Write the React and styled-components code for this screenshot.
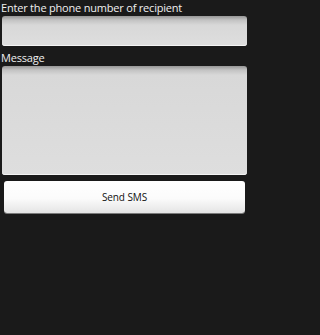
import React from 'react';
import styled, { createGlobalStyle } from 'styled-components';

const GlobalStyle = createGlobalStyle`
  html, body {
    margin: 0;
    padding: 0;
    background: #1a1a1a;
  }
  body {
    font-family: "Open Sans", "DejaVu Sans", sans-serif;
  }
`;

const Screen = styled.div`
  width: 250px;
  height: 335px;
  background: #1a1a1a;
  display: flex;
  flex-direction: column;
  box-sizing: border-box;
  padding: 0 3px 0 2px;
`;

const Label = styled.div`
  color: #f0f0f0;
  font-size: 11px;
  letter-spacing: -0.2px;
  line-height: 15px;
  height: 15px;
  margin-left: -1px;
  margin-top: ${(p) => p.top || 0}px;
`;

const Field = styled.div`
  height: ${(p) => p.height}px;
  margin-top: 1px;
  border-radius: 3px;
  background: linear-gradient(#969696 0px, #c2c2c2 4px, #d8d8d8 9px, #dedede 100%);
  box-shadow: inset 0 -1px 0 #f4f4f4;
`;

const Button = styled.button`
  margin: 6px 2px 0 2px;
  height: 32px;
  border: none;
  border-radius: 3px;
  background: linear-gradient(#ffffff 0%, #fbfbfb 55%, #e4e4e4 100%);
  box-shadow: 0 1px 0 #7a7a7a;
  color: #111;
  font-family: "Open Sans", "DejaVu Sans", sans-serif;
  font-size: 10px;
  letter-spacing: -0.1px;
  padding: 0;
`;

export default function App() {
  return (
    <>
      <GlobalStyle />
      <Screen>
        <Label>Enter the phone number of recipient</Label>
        <Field height={30} />
        <Label top={4}>Message</Label>
        <Field height={109} />
        <Button>Send SMS</Button>
      </Screen>
    </>
  );
}
